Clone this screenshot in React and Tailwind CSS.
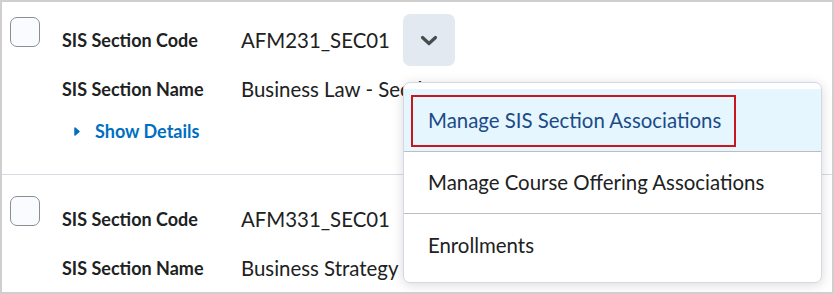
import React from 'react';

const font = { fontFamily: 'Lato, "Noto Sans", sans-serif' };

function Checkbox() {
  return (
    <div className="mt-[3px] ml-[8px] w-[30px] h-[30px] shrink-0 rounded-[7px] border-[1.5px] border-[#8a8e93] bg-[#f9fbff]" />
  );
}

function Chevron() {
  return (
    <svg width="18" height="11" viewBox="0 0 18 11" fill="none">
      <path d="M2.5 2.5l6.5 6 6.5-6" stroke="#494c4e" strokeWidth="3.2" strokeLinecap="round" strokeLinejoin="round" />
    </svg>
  );
}

function SectionRow({ code, name, showButton, showDetails, className }) {
  return (
    <div className={`flex items-start ${className}`}>
      <Checkbox />
      <div className="ml-[22px] flex flex-col">
        <div className="flex items-center h-[52px]">
          <div className="w-[179px] text-[18px] font-bold text-[#202122]">SIS Section Code</div>
          <div className="text-[20.4px] text-[#202122]">{code}</div>
          {showButton && (
            <div className="ml-[13px] w-[52px] h-[52px] rounded-[7px] bg-[#e3e9f1] flex items-center justify-center">
              <Chevron />
            </div>
          )}
        </div>
        <div className="flex items-center h-[28px] mt-[9px]">
          <div className="w-[179px] text-[18px] font-bold text-[#202122]">SIS Section Name</div>
          <div className="text-[20.4px] text-[#202122] whitespace-nowrap">{name}</div>
        </div>
        {showDetails && (
          <div className="flex items-center h-[28px] mt-[14px] pl-[12px]">
            <svg width="6" height="9" viewBox="0 0 6 9">
              <path d="M1 1l4 3.5L1 8z" fill="#006fbf" stroke="#006fbf" strokeWidth="1.5" strokeLinejoin="round" />
            </svg>
            <span className="ml-[15px] text-[18px] font-bold text-[#006fbf]">Show Details</span>
          </div>
        )}
      </div>
    </div>
  );
}

export default function App() {
  return (
    <div style={font} className="relative w-[834px] h-[294px] border-2 border-[#cfcfcf] bg-white overflow-hidden">
      <SectionRow
        code="AFM231_SEC01"
        name="Business Law - Section 1"
        showButton
        showDetails
        className="pt-[12px] h-[173px] border-b border-[#d6dce4]"
      />
      <SectionRow
        code="AFM331_SEC01"
        name="Business Strategy and Planning"
        className="pt-[18px]"
      />

      {/* dropdown menu */}
      <div className="absolute left-[401px] top-[80px] w-[419px] h-[201px] rounded-[7px] border border-[#d3d9e3] bg-white shadow-[0_2px_12px_rgba(0,0,0,0.15)] py-[6px] flex flex-col">
        <div className="relative h-[63px] bg-[#e6f6ff] border-b border-[#bdbdbd] flex items-center pl-[24px]">
          <span className="text-[20.4px] text-[#1b4b87]">Manage SIS Section Associations</span>
          <div className="absolute left-[7px] top-[6px] w-[325px] h-[52px] border-2 border-[#c8171f]" />
        </div>
        <div className="h-[62px] border-b border-[#bdbdbd] flex items-center pl-[24px]">
          <span className="text-[20.4px] text-[#202122]">Manage Course Offering Associations</span>
        </div>
        <div className="flex-1 flex items-center pl-[24px]">
          <span className="text-[20.4px] text-[#202122]">Enrollments</span>
        </div>
      </div>
    </div>
  );
}
